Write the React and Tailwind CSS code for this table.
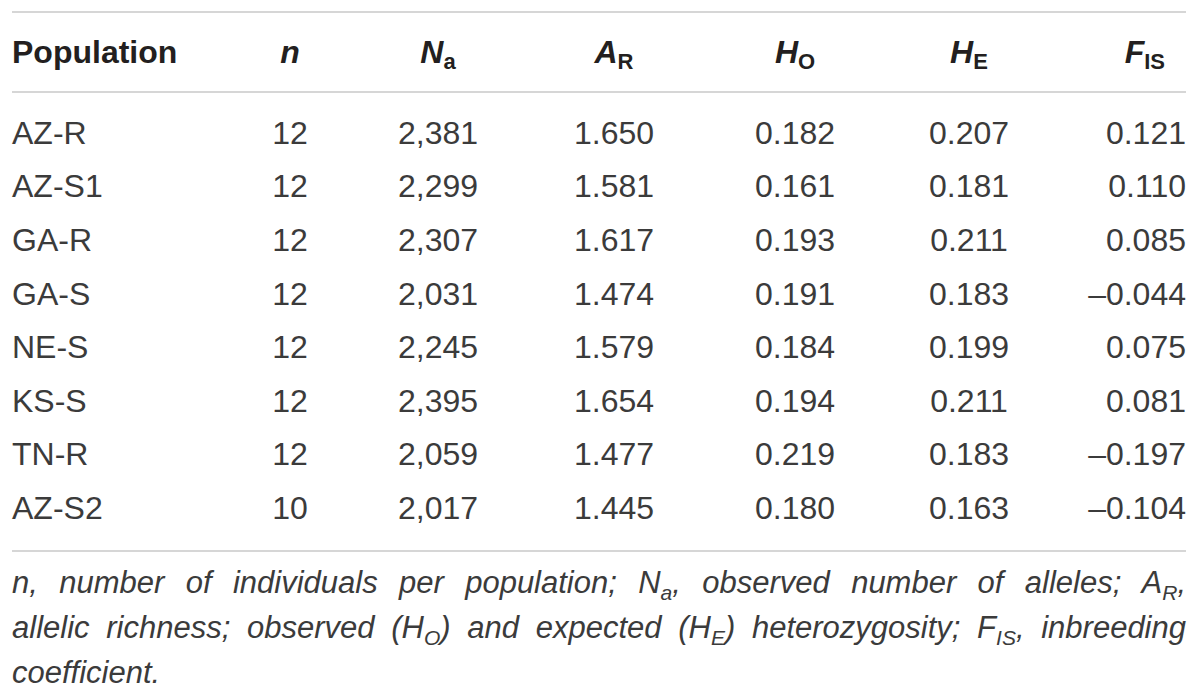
import React from 'react';

const rows = [
  ['AZ-R', '12', '2,381', '1.650', '0.182', '0.207', '0.121'],
  ['AZ-S1', '12', '2,299', '1.581', '0.161', '0.181', '0.110'],
  ['GA-R', '12', '2,307', '1.617', '0.193', '0.211', '0.085'],
  ['GA-S', '12', '2,031', '1.474', '0.191', '0.183', '\u20130.044'],
  ['NE-S', '12', '2,245', '1.579', '0.184', '0.199', '0.075'],
  ['KS-S', '12', '2,395', '1.654', '0.194', '0.211', '0.081'],
  ['TN-R', '12', '2,059', '1.477', '0.219', '0.183', '\u20130.197'],
  ['AZ-S2', '10', '2,017', '1.445', '0.180', '0.163', '\u20130.104'],
];

const cols = 'grid grid-cols-[208px_140px_156px_196px_166px_182px_126px]';

// bold italic symbol with an upright subscript, as in the header
const Sym = ({ main, sub }) => (
  <span>
    <span className="italic">{main}</span>
    <span className="relative top-[6px] text-[22px]">{sub}</span>
  </span>
);

const Sub = ({ children }) => (
  <span className="relative top-[7px] text-[21px]">{children}</span>
);

export default function App() {
  return (
    <div className="w-[1200px] h-[694px] bg-white px-[12px] pt-[11px] font-['Liberation_Sans',Arial,sans-serif] text-[#231f20]">
      <div className="w-[1174px] border-t-2 border-b-2 border-[#d6d6d6]">
        <div className={`${cols} h-[80px] items-center border-b-2 border-[#d6d6d6] font-bold text-[32px] leading-none`}>
          <div>Population</div>
          <div className="text-center italic">n</div>
          <div className="text-center"><Sym main="N" sub="a" /></div>
          <div className="text-center"><Sym main="A" sub="R" /></div>
          <div className="text-center"><Sym main="H" sub="O" /></div>
          <div className="text-center"><Sym main="H" sub="E" /></div>
          <div className="text-right pr-[21px]"><Sym main="F" sub="IS" /></div>
        </div>
        <div className="pt-[13px] pb-[15px] text-[32px] leading-none text-[#3b3b3b]">
          {rows.map((r) => (
            <div key={r[0]} className={`${cols} h-[53.6px] items-center`}>
              <div>{r[0]}</div>
              <div className="text-center">{r[1]}</div>
              <div className="text-center">{r[2]}</div>
              <div className="text-center">{r[3]}</div>
              <div className="text-center">{r[4]}</div>
              <div className="text-center">{r[5]}</div>
              <div className="text-right">{r[6]}</div>
            </div>
          ))}
        </div>
      </div>
      <p className="w-[1174px] mt-[10px] italic text-[31px] leading-[42px] text-justify text-[#3b3b3b]">
        n, number of individuals per population; N<Sub>a</Sub>, observed number of alleles; A<Sub>R</Sub>,{' '}
        <span className="whitespace-nowrap">allelic richness;</span> observed (H<Sub>O</Sub>) and expected (H
        <Sub>E</Sub>) heterozygosity; F<Sub>IS</Sub>, inbreeding coefficient.
      </p>
    </div>
  );
}
